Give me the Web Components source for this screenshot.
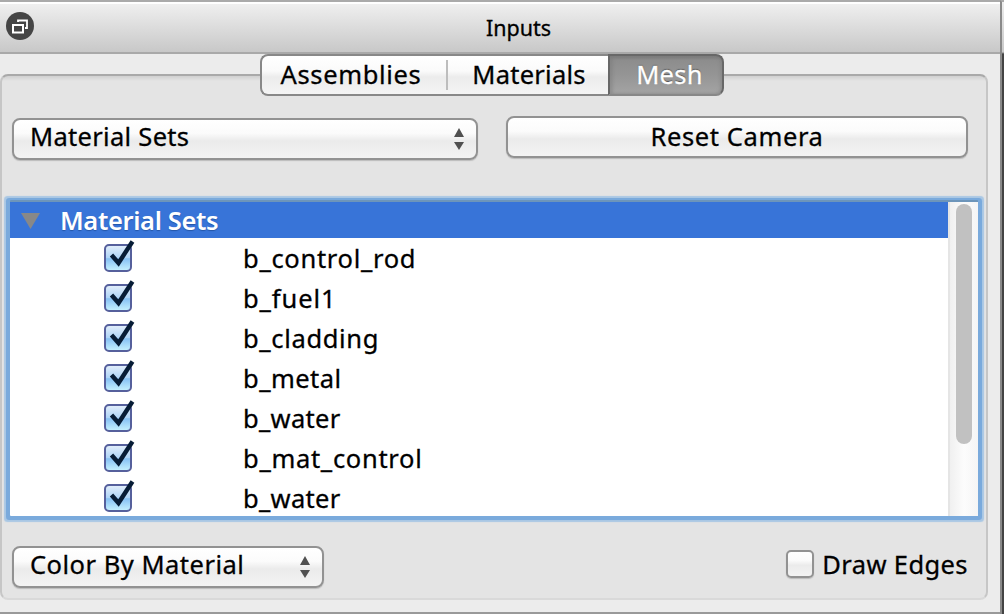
<!DOCTYPE html>
<html lang="en">
<head>
<meta charset="utf-8">
<title>Inputs</title>
<style>
html,body{margin:0;height:100%;overflow:hidden}
body{font:25.5px/30px "Noto Sans","Open Sans",sans-serif;color:#000;background:#ececec;-webkit-text-stroke:.3px}
</style>
</head>
<body>
<inputs-panel></inputs-panel>
<script>
const define = (name, html, setup) => customElements.define(name, class extends HTMLElement {
  connectedCallback() {
    if (this.shadowRoot) return;
    const t = document.createElement('template');
    t.innerHTML = html;
    this.attachShadow({mode: 'open'}).append(t.content.cloneNode(true));
    if (setup) setup(this, this.shadowRoot);
  }
});

define('dock-title', `<style>
:host{display:flex;align-items:center;box-sizing:border-box;height:54px;border-top:2px solid #aaa;border-bottom:2px solid #a9a9a9;background:linear-gradient(#fff 0 2px,#efefef 2px,#c8c8c8 50px);padding-left:5px;font-size:21.5px}
svg{width:30px;height:30px;flex:none;margin-top:-2px}
.t{flex:1;text-align:center;padding-left:2px;margin-top:1px}
</style><svg viewBox="0 0 30 30"><circle cx="15" cy="15" r="14" fill="#454545"/><path d="M13 11V9.500h9V17H20" fill="none" stroke="#fff" stroke-width="1.800"/><rect x="8" y="14" width="10" height="7.500" fill="#454545" stroke="#fff" stroke-width="2"/></svg><div class="t"><slot></slot></div>`);

define('tab-item', `<style>
:host{display:flex;box-sizing:border-box;height:42px;align-items:center;justify-content:center;position:relative;border:solid #888;border-width:2px 0;background:linear-gradient(#fff 0%,#fafafa 40%,#ececec 55%,#f4f4f4);padding-bottom:2px}
:host([first]){border-left-width:2px;border-radius:8px 0 0 8px;padding-right:8px}
:host([divided])::after{content:"";position:absolute;right:0;top:4px;width:2px;height:30px;background:#bdbdbd}
:host([active]){border:2px solid #686868;border-bottom-color:#888;border-radius:0 8px 8px 0;background:linear-gradient(#7d7d7d,#8d8d8d 12%,#959595 50%,#a4a4a4);box-shadow:inset 3px 0 3px #7776,inset -2px 0 3px #7776;color:#fff;text-shadow:0 -1px 1px #555;padding-left:7px}
span{letter-spacing:var(--ls,0);white-space:nowrap}
</style><span><slot></slot></span>`);

define('tab-strip', `<style>:host{display:grid;grid-template-columns:188px 160px 116px;width:464px;position:relative;z-index:1}</style><slot></slot>`);

const face = 'box-sizing:border-box;border:2px solid #929292;border-radius:8px;background:linear-gradient(#fff 0%,#fbfbfb 35%,#ebebeb 55%,#f3f3f3);box-shadow:0 1px 1px #bbb;';
define('push-button', `<style>:host{display:flex;${face}height:42px;align-items:center;justify-content:center;padding-bottom:2px}span{letter-spacing:var(--ls,0);white-space:nowrap}</style><span><slot></slot></span>`);

define('combo-box', `<style>:host{display:flex;${face}height:42px;align-items:center;justify-content:space-between;padding:0 11px 0 16px}span{letter-spacing:var(--ls,0);white-space:nowrap;margin-top:-6px}svg{width:12px;height:24px}</style><span><slot></slot></span><svg viewBox="0 0 12 24"><path d="M6 1L11 10H1zM6 23L11 15H1z" fill="#505050"/></svg>`);

define('check-box', `<style>:host{display:flex;align-items:center;gap:8px}
i{${face}width:28px;height:28px;border-radius:5px;flex:none}
svg{display:none;width:32px;height:34px;flex:none;overflow:visible}
:host([checked]) svg{display:block}:host([checked]) i{display:none}
span{letter-spacing:var(--ls,0);white-space:nowrap}</style><i></i><svg viewBox="0 0 32 34"><defs><linearGradient id="g" x2="0" y2="1"><stop stop-color="#e4effb"/><stop offset=".48" stop-color="#b0d5f7"/><stop offset=".53" stop-color="#87c1f4"/><stop offset="1" stop-color="#c8f3ff"/></linearGradient></defs><rect x="1" y="5" width="26" height="26" rx="4" fill="url(#g)" stroke="#56609c" stroke-width="2"/><path d="M7.500 15L14.500 23L28.500 1.500" fill="none" stroke="#071c36" stroke-width="4.400"/></svg><span><slot></slot></span>`);

define('tree-head', `<style>:host{display:flex;align-items:center;height:36px;background:#3874d8;color:#fff;font-weight:600;padding-left:11px;gap:20px;text-shadow:0 1px 1px #2456a8;-webkit-text-stroke:0}
svg{width:19px;height:16px;margin-top:2px}span{letter-spacing:var(--ls,0)}</style><svg viewBox="0 0 19 16"><path d="M0 0H19L9.500 16z" fill="#888"/></svg><span><slot></slot></span>`);

define('tree-row', `<style>:host{display:flex;height:40px;align-items:center;padding-left:94px}
check-box{width:139px;margin-top:-2px}span{letter-spacing:var(--ls,0);white-space:nowrap}</style><check-box checked></check-box><span><slot></slot></span>`);

define('tree-view', `<style>:host{display:grid;grid-template-columns:938px 30px;width:968px;height:314px;background:#fff;box-shadow:0 -2px 0 0 #6d95ba,0 0 0 4px #7aaadc,0 0 1px 6px #a9c7e4;border-radius:1px}
.rows{overflow:hidden;height:314px}
.bar{box-sizing:border-box;height:314px;border-left:2px solid #e5e5e5;background:linear-gradient(90deg,#f0f0f0,#fcfcfc 50%,#f5f5f5);padding:2px 6px}
.thumb{width:16px;height:240px;border-radius:8px;background:#c1c1c1}
</style><div class="rows"><slot></slot></div><div class="bar"><div class="thumb"></div></div>`);

define('group-box', `<style>:host{display:block;box-sizing:border-box;width:988px;height:526px;margin-top:-22px;padding:40px 18px 0 10px;border:2px solid #c6c6c6;border-top-color:#a9a9a9;border-bottom-color:#d9d9d9;border-radius:8px;background:linear-gradient(#d0d0d0,#e4e4e4 5px)}</style><slot></slot>`);

define('inputs-panel', `<style>
:host{display:grid;grid-template-columns:1000px 4px;height:614px}
main{box-sizing:border-box;height:614px;border-bottom:2px solid #999;background:#ececec}
.side{box-sizing:border-box;border-left:2px solid #8a8a8a;border-top:2px solid #aaa;background:linear-gradient(#eee,#c8c8c8 50px,#444 52px)}
tab-strip{margin-left:260px}
.top{display:flex;justify-content:space-between;align-items:flex-start}
combo-box.a{width:466px;margin-top:2px;--ls:.3px}
push-button{width:462px;--ls:.6px}
tree-view{margin:42px 0 0 -2px}
tree-head{--ls:-.35px}
.foot{display:flex;justify-content:space-between;margin-top:30px}
combo-box.b{width:312px;--ls:.5px}
.foot check-box{height:36px;--ls:.4px}
</style><main><dock-title>Inputs</dock-title>
<tab-strip><tab-item first divided style="--ls:.65px">Assemblies</tab-item><tab-item style="--ls:.25px;padding-left:2px">Materials</tab-item><tab-item active style="--ls:.3px">Mesh</tab-item></tab-strip>
<group-box><div class="top"><combo-box class="a">Material Sets</combo-box><push-button>Reset Camera</push-button></div>
<tree-view><tree-head>Material Sets</tree-head><tree-row style="--ls:.7px">b_control_rod</tree-row><tree-row style="--ls:.9px">b_fuel1</tree-row><tree-row style="--ls:.65px">b_cladding</tree-row><tree-row style="--ls:.45px">b_metal</tree-row><tree-row style="--ls:.3px">b_water</tree-row><tree-row style="--ls:.7px">b_mat_control</tree-row><tree-row style="--ls:.3px">b_water</tree-row></tree-view>
<div class="foot"><combo-box class="b">Color By Material</combo-box><check-box>Draw Edges</check-box></div></group-box></main><div class="side"></div>`);
</script>
</body>
</html>
